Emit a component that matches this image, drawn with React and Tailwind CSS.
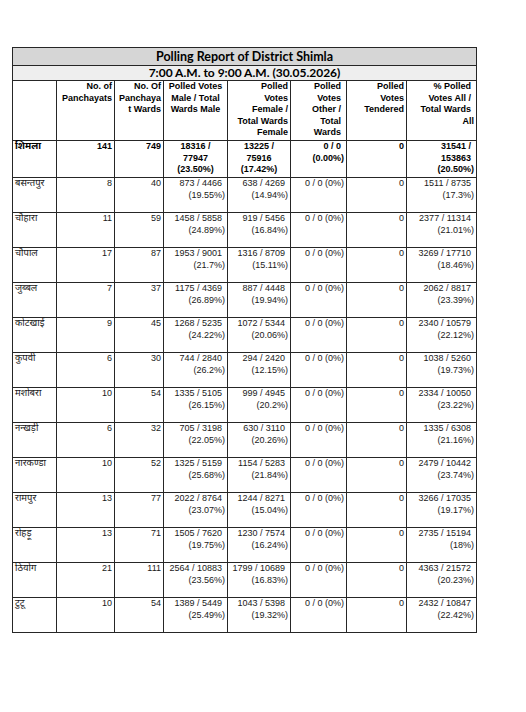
import React from "react";

const rows = [
  ["बसन्तपुर", 8, 40, "873 / 4466", "(19.55%)", "638 / 4269", "(14.94%)", "1511 / 8735", "(17.3%)"],
  ["चौहारा", 11, 59, "1458 / 5858", "(24.89%)", "919 / 5456", "(16.84%)", "2377 / 11314", "(21.01%)"],
  ["चौपाल", 17, 87, "1953 / 9001", "(21.7%)", "1316 / 8709", "(15.11%)", "3269 / 17710", "(18.46%)"],
  ["जुब्बल", 7, 37, "1175 / 4369", "(26.89%)", "887 / 4448", "(19.94%)", "2062 / 8817", "(23.39%)"],
  ["कोटखाई", 9, 45, "1268 / 5235", "(24.22%)", "1072 / 5344", "(20.06%)", "2340 / 10579", "(22.12%)"],
  ["कुपवी", 6, 30, "744 / 2840", "(26.2%)", "294 / 2420", "(12.15%)", "1038 / 5260", "(19.73%)"],
  ["मशोबरा", 10, 54, "1335 / 5105", "(26.15%)", "999 / 4945", "(20.2%)", "2334 / 10050", "(23.22%)"],
  ["नन्खड़ी", 6, 32, "705 / 3198", "(22.05%)", "630 / 3110", "(20.26%)", "1335 / 6308", "(21.16%)"],
  ["नारकण्डा", 10, 52, "1325 / 5159", "(25.68%)", "1154 / 5283", "(21.84%)", "2479 / 10442", "(23.74%)"],
  ["रामपुर", 13, 77, "2022 / 8764", "(23.07%)", "1244 / 8271", "(15.04%)", "3266 / 17035", "(19.17%)"],
  ["रोहड़ू", 13, 71, "1505 / 7620", "(19.75%)", "1230 / 7574", "(16.24%)", "2735 / 15194", "(18%)"],
  ["ठियोग", 21, 111, "2564 / 10883", "(23.56%)", "1799 / 10689", "(16.83%)", "4363 / 21572", "(20.23%)"],
  ["टुटू", 10, 54, "1389 / 5449", "(25.49%)", "1043 / 5398", "(19.32%)", "2432 / 10847", "(22.42%)"],
];

const widths = [44, 58, 49, 64, 63, 56, 60, 70];

const cell = "border border-[#262626] align-top px-[2px] text-right";
const hi = "font-['Liberation_Sans',Arial,sans-serif]";
const dev = "font-['Noto_Sans_Devanagari','Lohit_Devanagari','Liberation_Sans',sans-serif]";

// two line value: first line keeps a trailing space like the sheet does
const Pair = ({ a, b }) => (
  <>
    <div className="pr-[3px]">{a}</div>
    <div>{b}</div>
  </>
);

export default function App() {
  return (
    <div className="w-[526px] h-[712px] bg-white pt-[47px] pl-[12px]">
      <table
        className={`border-collapse table-fixed w-[465px] text-[9px] leading-[11.5px] text-[#1a1a1a] ${hi}`}
      >
        <colgroup>
          {widths.map((w, i) => (
            <col key={i} style={{ width: w }} />
          ))}
        </colgroup>
        <tbody>
          <tr>
            <td
              colSpan={8}
              className="border border-[#262626] bg-[#d6d6d6] h-[18px] p-0 text-center align-middle text-[12.5px] leading-[16px] font-bold text-black font-['Lato','Open_Sans',sans-serif]"
            >
              Polling Report of District Shimla
            </td>
          </tr>
          <tr>
            <td
              colSpan={8}
              className="border border-[#262626] bg-[#eeeeee] h-[15px] p-0 text-center align-middle text-[12px] leading-[14px] font-bold text-black font-['Lato','Open_Sans',sans-serif]"
            >
              7:00 A.M. to 9:00 A.M. (30.05.2026)
            </td>
          </tr>
          <tr className="font-bold text-black">
            <td className={`${cell} h-[60px]`}></td>
            <td className={cell}>
              No. of
              <br />
              Panchayats
            </td>
            <td className={cell}>
              No. Of
              <br />
              Panchaya
              <br />t Wards
            </td>
            <td className={`${cell} !text-center`}>
              Polled Votes
              <br />
              Male / Total
              <br />
              Wards Male
            </td>
            <td className={cell}>
              Polled
              <br />
              Votes
              <br />
              Female /
              <br />
              Total Wards
              <br />
              Female
            </td>
            <td className={cell}>
              <div className="pr-[3px]">
                Polled
                <br />
                Votes
                <br />
                Other /
                <br />
                Total
                <br />
                Wards
              </div>
            </td>
            <td className={cell}>
              Polled
              <br />
              Votes
              <br />
              Tendered
            </td>
            <td className={cell}>
              <div className="pr-[3px]">
                % Polled
                <br />
                Votes All /
                <br />
                Total Wards
              </div>
              <div>All</div>
            </td>
          </tr>
          <tr className="font-bold text-black">
            <td className={`${cell} h-[37px] !text-left ${dev} text-[9.5px]`}>शिमला</td>
            <td className={cell}>141</td>
            <td className={cell}>749</td>
            <td className={`${cell} !text-center`}>
              18316 /
              <br />
              77947
              <br />
              (23.50%)
            </td>
            <td className={`${cell} !text-center`}>
              13225 /
              <br />
              75916
              <br />
              (17.42%)
            </td>
            <td className={cell}>
              <div className="pr-[3px]">0 / 0</div>
              <div>(0.00%)</div>
            </td>
            <td className={cell}>0</td>
            <td className={cell}>
              <div className="pr-[3px]">
                31541 /
                <br />
                153863
              </div>
              <div>(20.50%)</div>
            </td>
          </tr>
          {rows.map((r) => (
            <tr key={r[0]}>
              <td className={`${cell} h-[35px] !text-left ${dev} text-[9.5px]`}>{r[0]}</td>
              <td className={cell}>{r[1]}</td>
              <td className={cell}>{r[2]}</td>
              <td className={cell}>
                <Pair a={r[3]} b={r[4]} />
              </td>
              <td className={cell}>
                <Pair a={r[5]} b={r[6]} />
              </td>
              <td className={cell}>0 / 0 (0%)</td>
              <td className={cell}>0</td>
              <td className={cell}>
                <Pair a={r[7]} b={r[8]} />
              </td>
            </tr>
          ))}
        </tbody>
      </table>
    </div>
  );
}
